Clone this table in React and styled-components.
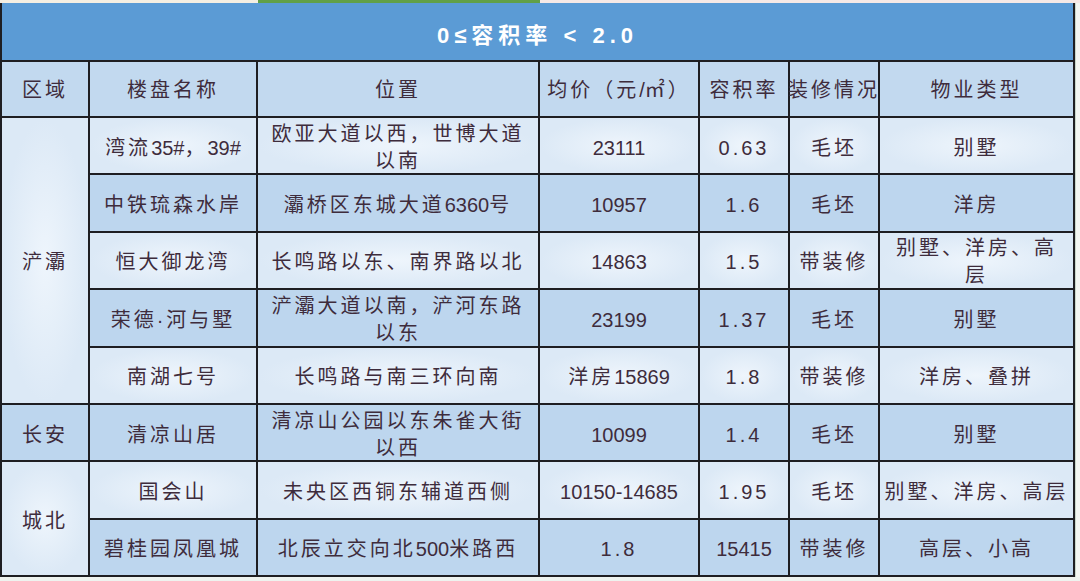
import styled, { createGlobalStyle } from 'styled-components';

const GlobalStyle = createGlobalStyle`
	html, body {
		margin: 0;
		padding: 0;
		background: #eef3ef;
	}
	body {
		font-family: "Liberation Sans", "Noto Sans CJK SC", sans-serif;
	}
`

const Page = styled.div`
	width: 1080px;
	height: 581px;
	overflow: hidden;
	display: flex;
	flex-direction: column;
`
const TopStrip = styled.div`
	height: 3px;
	display: flex;
`
const StripPart = styled.div`
	width: ${p => p.$w ? p.$w + 'px' : 'auto'};
	flex: ${p => p.$w ? 'none' : 1};
	background: ${p => p.$color};
`
const Sheet = styled.div`
	display: flex;
	flex-direction: row;
`
const Table = styled.div`
	width: 1075px;
	box-sizing: border-box;
	display: grid;
	grid-template-columns: 86px 166px 280px 158px 88px 88px 193px;
	grid-template-rows: 57px 54px repeat(8, 55.4px);
	gap: 2px;
	padding: 0 2px 2px 2px;
	background: #1e1e22;
`
const RightEdge = styled.div`
	flex: 1;
	background: #f3f6f2;
	border-left: 1px solid #c9d6c9;
`
const Title = styled.div`
	grid-column: 1 / span 7;
	background: #5b9bd5;
	display: flex;
	align-items: center;
	justify-content: center;
	color: #fff;
	font-weight: bold;
	font-size: 22px;
	letter-spacing: 5px;
	padding-top: 3px;
	white-space: pre;
`
const Cell = styled.div`
	display: flex;
	align-items: center;
	justify-content: center;
	text-align: center;
	overflow: ${p => p.$wrap ? 'hidden' : 'visible'};
	box-sizing: border-box;
	padding-top: 4px;
	font-size: 20px;
	line-height: ${p => p.$wrap ? '27px' : '30px'};
	color: #3e2c3c;
	letter-spacing: ${p => p.$spaced ? '3px' : '0'};
	background: ${p => p.$dark
		? '#bdd6ee'
		: 'radial-gradient(ellipse at center, #eef5fc 0%, #dce9f6 70%)'};
	grid-row: ${p => p.$span ? `span ${p.$span}` : 'auto'};
`
const HeadCell = styled(Cell)`
	background: #c2d9ef;
	padding-top: 2px;
`
const Lines = styled.span`
	display: block;
	white-space: pre;
`
const Han = styled.span`
	letter-spacing: 3px;
`

const header = ['区域', '楼盘名称', '位置', '均价（元/㎡）', '容积率', '装修情况', '物业类型'];

const regions = { 0: ['浐灞', 5], 5: ['长安', 1], 6: ['城北', 2] };

const rows = [
	['湾流35#，39#', '欧亚大道以西，世博大道\n以南', '23111', '0.63', '毛坯', '别墅'],
	['中铁琉森水岸', '灞桥区东城大道6360号', '10957', '1.6', '毛坯', '洋房'],
	['恒大御龙湾', '长鸣路以东、南界路以北', '14863', '1.5', '带装修', '别墅、洋房、高\n层'],
	['荣德·河与墅', '浐灞大道以南，浐河东路\n以东', '23199', '1.37', '毛坯', '别墅'],
	['南湖七号', '长鸣路与南三环向南', '洋房15869', '1.8', '带装修', '洋房、叠拼'],
	['清凉山居', '清凉山公园以东朱雀大街\n以西', '10099', '1.4', '毛坯', '别墅'],
	['国会山', '未央区西铜东辅道西侧', '10150-14685', '1.95', '毛坯', '别墅、洋房、高层'],
	['碧桂园凤凰城', '北辰立交向北500米路西', '1.8', '15415', '带装修', '高层、小高'],
];

const hanRun = /([\u3000-\u303f\u4e00-\u9fff\uff00-\uffef·\u33a1]+)/;

// CJK runs get the wide spacing, latin digits stay tight
function Txt({ text }) {
	const parts = text.split(hanRun);
	return (
		<Lines>
			{parts.map((part, i) =>
				i % 2 === 1 ? <Han key={i}>{part}</Han> : part
			)}
		</Lines>
	);
}

export default function App() {
	return (
		<Page>
			<GlobalStyle />
			<TopStrip>
				<StripPart $w={258} $color="#f5efe2" />
				<StripPart $w={282} $color="#61a047" />
				<StripPart $color="#f6e9e6" />
			</TopStrip>
			<Sheet>
				<Table>
					<Title>0≤容积率 &lt; 2.0</Title>
					{header.map(h => (
						<HeadCell key={h}><Txt text={h} /></HeadCell>
					))}
					{rows.map((row, r) => {
						const dark = r % 2 === 1;
						const region = regions[r];
						return [
							region && (
								<Cell key={'reg' + r} $span={region[1]} $dark={r === 5}>
									<Txt text={region[0]} />
								</Cell>
							),
							...row.map((val, c) => (
								<Cell
									key={r + '-' + c}
									$dark={dark}
									$wrap={val.includes('\n')}
									$spaced={/^\d\.\d+$/.test(val)}
								>
									<Txt text={val} />
								</Cell>
							)),
						];
					})}
				</Table>
				<RightEdge />
			</Sheet>
		</Page>
	);
}
